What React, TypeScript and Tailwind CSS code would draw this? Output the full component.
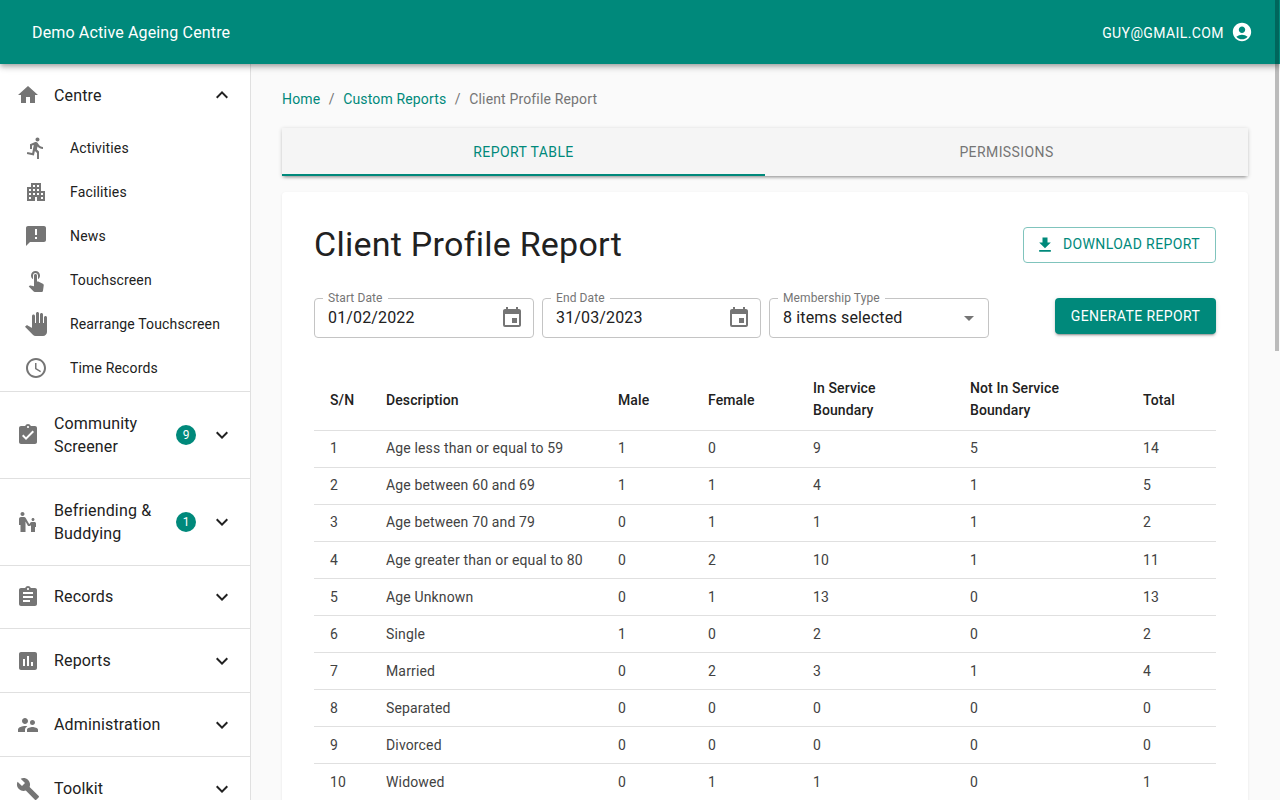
import React from 'react';
import {
  MdHome, MdExpandLess, MdExpandMore, MdDirectionsRun, MdApartment, MdAnnouncement, MdTouchApp, MdPanTool,
  MdAccessTime, MdAssignmentTurnedIn, MdEscalatorWarning, MdAssignment, MdAssessment, MdSupervisorAccount, MdBuild,
  MdAccountCircle, MdEvent, MdGetApp, MdArrowDropDown,
} from 'react-icons/md';

const subItems = [
  { label: 'Activities', icon: MdDirectionsRun },
  { label: 'Facilities', icon: MdApartment },
  { label: 'News', icon: MdAnnouncement },
  { label: 'Touchscreen', icon: MdTouchApp },
  { label: 'Rearrange Touchscreen', icon: MdPanTool },
  { label: 'Time Records', icon: MdAccessTime },
];

const navItems = [
  { label: ['Community', 'Screener'], icon: MdAssignmentTurnedIn, badge: 9 },
  { label: ['Befriending &', 'Buddying'], icon: MdEscalatorWarning, badge: 1 },
  { label: ['Records'], icon: MdAssignment },
  { label: ['Reports'], icon: MdAssessment },
  { label: ['Administration'], icon: MdSupervisorAccount },
  { label: ['Toolkit'], icon: MdBuild },
];

const rows = [
  [1, 'Age less than or equal to 59', 1, 0, 9, 5, 14],
  [2, 'Age between 60 and 69', 1, 1, 4, 1, 5],
  [3, 'Age between 70 and 79', 0, 1, 1, 1, 2],
  [4, 'Age greater than or equal to 80', 0, 2, 10, 1, 11],
  [5, 'Age Unknown', 0, 1, 13, 0, 13],
  [6, 'Single', 1, 0, 2, 0, 2],
  [7, 'Married', 0, 2, 3, 1, 4],
  [8, 'Separated', 0, 0, 0, 0, 0],
  [9, 'Divorced', 0, 0, 0, 0, 0],
  [10, 'Widowed', 0, 1, 1, 0, 1],
];

function OutlinedField({ label, value, width, icon }: { label: string; value: string; width: string; icon: React.ReactNode }) {
  return (
    <div className={`relative flex h-10 items-center justify-between rounded border border-[#c4c4c4] pl-[13px] pr-[9px] ${width}`}>
      <span className="absolute -top-[8px] left-[8px] bg-white px-[5px] text-xs leading-[14px] tracking-[0.1px] text-[#757575]">{label}</span>
      <span className="text-base tracking-[0.15px] text-[#212121]">{value}</span>
      {icon}
    </div>
  );
}

export default function App() {
  return (
    <div className="relative flex h-screen flex-col overflow-hidden bg-[#fafafa] font-['Roboto',sans-serif] text-[#212121]">
      <header className="relative z-10 flex h-16 shrink-0 items-center justify-between bg-[#00897b] pl-8 pr-[27px] text-white shadow-[0_2px_4px_-1px_rgba(0,0,0,0.2),0_4px_5px_0_rgba(0,0,0,0.14),0_1px_10px_0_rgba(0,0,0,0.12)]">
        <div className="pt-px text-base tracking-[0.15px]">Demo Active Ageing Centre</div>
        <div className="flex items-center gap-[7px]">
          <span className="pt-px text-sm uppercase tracking-[0.4px]">guy@gmail.com</span>
          <MdAccountCircle size={22} />
        </div>
      </header>

      <div className="flex min-h-0 flex-1">
        <aside className="w-[251px] shrink-0 overflow-hidden border-r border-[#e0e0e0] bg-white">
          <div className="flex h-[62px] items-center pl-4 pr-4">
            <MdHome size={24} className="mr-[14px] text-[#757575]" />
            <span className="flex-1 pt-px text-base tracking-[0.15px]">Centre</span>
            <MdExpandLess size={24} />
          </div>
          <ul className="border-b border-[#e0e0e0] pb-px">
            {subItems.map((item) => (
              <li key={item.label} className="flex h-11 items-center pl-6">
                <item.icon size={24} className="mr-[22px] text-[#757575]" />
                <span className="text-sm tracking-[0.15px]">{item.label}</span>
              </li>
            ))}
          </ul>
          {navItems.map((item) => (
            <div key={item.label[0]} className="flex items-center border-b border-[#e0e0e0] py-5 pl-4 pr-4">
              <item.icon size={24} className="-my-[2px] mr-[14px] shrink-0 text-[#757575]" />
              <span className="-mb-[0.9px] flex-1 pt-[0.9px] text-base leading-[22.88px] tracking-[0.15px]">
                {item.label.map((line) => (
                  <span key={line} className="block">{line}</span>
                ))}
              </span>
              {item.badge && (
                <span className="mr-[14px] flex h-5 w-5 items-center justify-center rounded-full bg-[#00897b] text-xs text-white">{item.badge}</span>
              )}
              <MdExpandMore size={24} className="-my-[2px] shrink-0" />
            </div>
          ))}
        </aside>

        <main className="min-w-0 flex-1 overflow-hidden pl-[31px] pr-8 pt-[25px]">
          <nav className="flex h-5 items-center text-sm tracking-[0.15px] text-[#00897b]">
            <span>Home</span>
            <span className="mx-[8.5px] text-[#757575]">/</span>
            <span>Custom Reports</span>
            <span className="mx-[8.5px] text-[#757575]">/</span>
            <span className="text-[#757575]">Client Profile Report</span>
          </nav>

          <div className="mt-[19px] flex h-12 bg-[#f5f5f5] text-sm uppercase tracking-[0.4px] shadow-[0_3px_3px_-2px_rgba(0,0,0,0.3),0_1px_4px_0_rgba(0,0,0,0.2)]">
            <div className="flex flex-1 items-center justify-center border-b-2 border-[#00897b] pt-[2px] text-[#00897b]">Report Table</div>
            <div className="flex flex-1 items-center justify-center text-[#757575]">Permissions</div>
          </div>

          <section className="mt-4 rounded bg-white px-8 pb-8 pt-[35px] shadow-[0_1px_3px_0_rgba(0,0,0,0.08)]">
            <div className="flex h-9 items-center justify-between">
              <h1 className="pb-[2px] text-[34px] leading-9 tracking-[0.25px] text-[#212121]">Client Profile Report</h1>
              <button className="flex h-9 w-[193px] items-center justify-end rounded border border-[#80c4bd] pr-[15px] text-sm uppercase tracking-[0.4px] text-[#00897b]">
                <MdGetApp size={20} className="mr-2" />
                <span className="pb-[2px]">Download Report</span>
              </button>
            </div>

            <div className="mt-[35px] flex items-start gap-2">
              <OutlinedField label="Start Date" value="01/02/2022" width="w-[220px]" icon={<MdEvent size={24} className="text-[#757575]" />} />
              <OutlinedField label="End Date" value="31/03/2023" width="w-[219px]" icon={<MdEvent size={24} className="text-[#757575]" />} />
              <OutlinedField label="Membership Type" value="8 items selected" width="w-[220px]" icon={<MdArrowDropDown size={24} className="-mr-[2px] text-[#757575]" />} />
              <button className="ml-auto h-9 w-[161px] rounded bg-[#00897b] text-sm uppercase tracking-[0.4px] text-white shadow-[0_3px_1px_-2px_rgba(0,0,0,0.2),0_2px_2px_0_rgba(0,0,0,0.14),0_1px_5px_0_rgba(0,0,0,0.12)]">
                Generate Report
              </button>
            </div>

            <table className="mt-[31px] w-full table-fixed text-left text-sm tracking-[0.15px]">
              <thead>
                <tr className="border-b border-[#e0e0e0]">
                  <th className="w-[56px] px-4 pb-2 pt-[9px] font-medium leading-[22px] tracking-[0.1px]">S/N</th>
                  <th className="w-[232px] px-4 pb-2 pt-[9px] font-medium leading-[22px] tracking-[0.1px]">Description</th>
                  <th className="w-[90px] px-4 pb-2 pt-[9px] font-medium leading-[22px] tracking-[0.1px]">Male</th>
                  <th className="w-[105px] px-4 pb-2 pt-[9px] font-medium leading-[22px] tracking-[0.1px]">Female</th>
                  <th className="w-[157px] px-4 pb-[9px] pt-2 font-medium leading-[22px] tracking-[0.1px]">In Service<br />Boundary</th>
                  <th className="w-[173px] px-4 pb-[9px] pt-2 font-medium leading-[22px] tracking-[0.1px]">Not In Service<br />Boundary</th>
                  <th className="w-[89px] px-4 pb-2 pt-[9px] font-medium leading-[22px] tracking-[0.1px]">Total</th>
                </tr>
              </thead>
              <tbody>
                {rows.map((row, r) => (
                  <tr key={row[0]} className="border-b border-[#e0e0e0]">
                    {row.map((cell, i) => (
                      <td key={i} className={`whitespace-nowrap px-4 leading-[20.02px] text-[#424242] ${r < 3 ? 'pb-[9px] pt-[7px]' : 'py-2'}`}>{cell}</td>
                    ))}
                  </tr>
                ))}
              </tbody>
            </table>
          </section>
        </main>
      </div>

      {/* overlay scrollbar thumb */}
      <div className="absolute right-px top-0 z-20 h-[351px] w-[4px] bg-black/25" />
    </div>
  );
}
